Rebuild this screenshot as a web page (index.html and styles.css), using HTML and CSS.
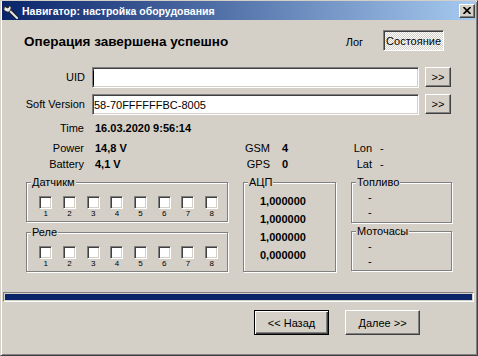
FILE: index.html
```html
<!DOCTYPE html>
<html lang="ru">
<head>
<meta charset="UTF-8">
<title>Навигатор: настройка оборудования</title>
<link rel="stylesheet" href="styles.css">
</head>
<body>

<div class="window">
    <div class="titlebar">
        <svg class="app-icon" width="16" height="16" viewBox="0 0 16 16">
            <path d="M7 7 L15 15" stroke="#202020" stroke-width="4" stroke-linecap="round"/>
            <path d="M7 7 L15 15" stroke="#e8e8e8" stroke-width="2" stroke-linecap="round"/>
            <path d="M2.5 3.5 A3.6 3.6 0 1 0 7.5 2.5 L6 5 L4 4 Z" fill="#e8e8e8" stroke="#202020" stroke-width="1"/>
        </svg>
        <span class="title">Навигатор: настройка оборудования</span>
        <button class="close">
            <svg width="8" height="7" viewBox="0 0 8 7"><path d="M0.5 0 L7.5 7 M7.5 0 L0.5 7" stroke="#000" stroke-width="1.6"/></svg>
        </button>
    </div>

    <div class="content">
        <div class="header">
            <h1>Операция завершена успешно</h1>
            <div class="tabs">
                <span class="tab">Лог</span>
                <span class="tab active">Состояние</span>
            </div>
        </div>

        <div class="form">
            <label>UID</label>
            <div class="input"><span class="caret"></span></div>
            <button class="btn">&gt;&gt;</button>

            <label>Soft Version</label>
            <div class="input">58-70FFFFFFBC-8005</div>
            <button class="btn">&gt;&gt;</button>
        </div>

        <div class="stats">
            <span class="lbl l1">Time</span>
            <b class="time">16.03.2020 9:56:14</b>

            <span class="lbl l1">Power</span>
            <b>14,8 V</b>
            <span class="lbl l2">GSM</span>
            <b>4</b>
            <span class="lbl l3">Lon</span>
            <span>-</span>

            <span class="lbl l1">Battery</span>
            <b>4,1 V</b>
            <span class="lbl l2">GPS</span>
            <b>0</b>
            <span class="lbl l3">Lat</span>
            <span>-</span>
        </div>

        <div class="groups">
            <div class="col">
                <fieldset class="box io">
                    <legend>Датчикм</legend>
                    <div class="checks">
                        <div class="check"><span class="cb"></span>1</div>
                        <div class="check"><span class="cb"></span>2</div>
                        <div class="check"><span class="cb"></span>3</div>
                        <div class="check"><span class="cb"></span>4</div>
                        <div class="check"><span class="cb"></span>5</div>
                        <div class="check"><span class="cb"></span>6</div>
                        <div class="check"><span class="cb"></span>7</div>
                        <div class="check"><span class="cb"></span>8</div>
                    </div>
                </fieldset>
                <fieldset class="box io">
                    <legend>Реле</legend>
                    <div class="checks">
                        <div class="check"><span class="cb"></span>1</div>
                        <div class="check"><span class="cb"></span>2</div>
                        <div class="check"><span class="cb"></span>3</div>
                        <div class="check"><span class="cb"></span>4</div>
                        <div class="check"><span class="cb"></span>5</div>
                        <div class="check"><span class="cb"></span>6</div>
                        <div class="check"><span class="cb"></span>7</div>
                        <div class="check"><span class="cb"></span>8</div>
                    </div>
                </fieldset>
            </div>

            <fieldset class="box adc">
                <legend>АЦП</legend>
                <b>1,000000</b>
                <b>1,000000</b>
                <b>1,000000</b>
                <b>0,000000</b>
            </fieldset>

            <div class="col right">
                <fieldset class="box info fuel">
                    <legend>Топливо</legend>
                    <span>-</span>
                    <span>-</span>
                </fieldset>
                <fieldset class="box info">
                    <legend>Моточасы</legend>
                    <span>-</span>
                    <span>-</span>
                </fieldset>
            </div>
        </div>

        <div class="progress"><div class="bar"></div></div>

        <div class="actions">
            <button class="btn big default">&lt;&lt; Назад</button>
            <button class="btn big">Далее &gt;&gt;</button>
        </div>
    </div>
</div>

</body>
</html>
```

FILE: styles.css
```css
* {
    box-sizing: border-box;
}

body {
    margin: 0;
    background: #d4d0c8;
    font-family: "Liberation Sans", Arial, sans-serif;
    font-size: 11px;
    color: #000;
}

/* Окно */
.window {
    width: 478px;
    height: 356px;
    background: #d4d0c8;
    border: 1px solid;
    border-color: #d4d0c8 #404040 #404040 #d4d0c8;
    box-shadow: inset 1px 1px #fff, inset -1px -1px #808080;
    display: flex;
    flex-direction: column;
}

.titlebar {
    height: 19px;
    margin: 0 1px;
    display: flex;
    align-items: center;
    background: linear-gradient(to right, #0a246a, #a6caf0);
    color: #fff;
    font-weight: bold;
}

.app-icon {
    flex: none;
}

.title {
    margin-left: 4px;
    font-size: 10.5px;
    white-space: nowrap;
}

.close {
    margin-left: auto;
    margin-right: 1px;
    width: 16px;
    height: 14px;
    padding: 0;
    display: flex;
    align-items: center;
    justify-content: center;
    background: #d4d0c8;
    border: 1px solid;
    border-color: #fff #404040 #404040 #fff;
    box-shadow: inset -1px -1px #808080;
}

.content {
    flex: 1;
}

/* Заголовок */
.header {
    margin: 10px 33px 0 23px;
    height: 21px;
    display: flex;
    justify-content: space-between;
    align-items: center;
}

h1 {
    margin: 0;
    font-size: 13.5px;
    font-weight: bold;
    padding-top: 2px;
}

.tabs {
    display: flex;
    align-items: center;
    height: 100%;
}

.tab {
    margin-right: 20px;
    padding-top: 2px;
}

.tab.active {
    margin-right: 0;
    height: 21px;
    padding: 0 2px;
    display: flex;
    align-items: center;
    border: 1px solid;
    border-color: #808080 #fff #fff #808080;
    box-shadow: inset 1px 1px #404040;
    background: repeating-conic-gradient(#fff 0 25%, #d4d0c8 0 50%) 0 0 / 2px 2px;
}

/* Поля */
.form {
    margin: 16px 0 0 3px;
    display: grid;
    grid-template-columns: 82px 327px 26px;
    column-gap: 6px;
    row-gap: 6px;
}

.form label {
    text-align: right;
    padding-right: 1px;
    line-height: 21px;
}

.input {
    height: 21px;
    background: #fff;
    border: 1px solid;
    border-color: #808080 #fff #fff #808080;
    box-shadow: inset 1px 1px #404040, inset -1px -1px #d4d0c8;
    padding: 0 1px;
    display: flex;
    align-items: center;
}

.caret {
    width: 1px;
    height: 14px;
    background: #000;
    margin-left: -1px;
}

.btn {
    height: 20px;
    padding: 0;
    background: #d4d0c8;
    font-family: inherit;
    font-size: 11px;
    color: #000;
    border: 1px solid;
    border-color: #fff #404040 #404040 #fff;
    box-shadow: inset -1px -1px #808080;
}

/* Показания */
.stats {
    margin: 5px 0 0 3px;
    display: grid;
    grid-template-columns: 91px 147px 40px 58px 40px 1fr;
    grid-template-rows: 20px 16px 16px;
    line-height: 16px;
}

.lbl {
    text-align: right;
}

.l1 { padding-right: 11px; }
.l2 { padding-right: 12px; }
.l3 { padding-right: 8px; }

.time {
    grid-column: 2 / -1;
}

/* Группы */
.groups {
    margin: 4px 0 0 25px;
    display: grid;
    grid-template-columns: 202px 93px 101px;
    column-gap: 15px;
    height: 96px;
}

.col {
    display: flex;
    flex-direction: column;
    gap: 4px;
}

.col.right {
    gap: 2px;
}

.box {
    margin: 0;
    min-width: 0;
    padding: 0;
    border: 1px solid #808080;
    box-shadow: inset 1px 1px #fff, 1px 1px #fff;
}

.box legend {
    margin-left: 4px;
    padding: 0 1px;
    line-height: 13px;
    background: #d4d0c8;
}

.io {
    height: 46px;
    padding-top: 7px;
}

.checks {
    margin-left: 7px;
    display: grid;
    grid-template-columns: repeat(8, 23.7px);
}

.check {
    display: flex;
    flex-direction: column;
    align-items: center;
    font-size: 8px;
    line-height: 9px;
}

.cb {
    width: 13px;
    height: 13px;
    background: #fff;
    border: 1px solid;
    border-color: #808080 #fff #fff #808080;
    box-shadow: inset 1px 1px #404040, inset -1px -1px #d4d0c8;
}

.adc {
    height: 96px;
    padding-top: 3px;
    line-height: 18px;
}

.adc b {
    display: block;
    margin-left: 16px;
}

.info {
    height: 46px;
    padding-top: 1px;
    line-height: 15px;
}

.info span {
    display: block;
    margin-left: 16px;
}

.fuel {
    height: 47px;
}

/* Прогресс */
.progress {
    margin: 20px 3px 0 2px;
    height: 10px;
    padding: 1px;
    border: 1px solid;
    border-color: #808080 #fff #fff #808080;
}

.bar {
    height: 100%;
    background: #0a246a;
}

/* Кнопки */
.actions {
    margin-top: 8px;
    padding-right: 57px;
    display: flex;
    justify-content: flex-end;
    gap: 16px;
}

.btn.big {
    width: 75px;
    height: 25px;
}

.btn.default {
    border: 1px solid #000;
    box-shadow: inset 1px 1px #fff, inset -1px -1px #404040, inset -2px -2px #808080;
}
```
